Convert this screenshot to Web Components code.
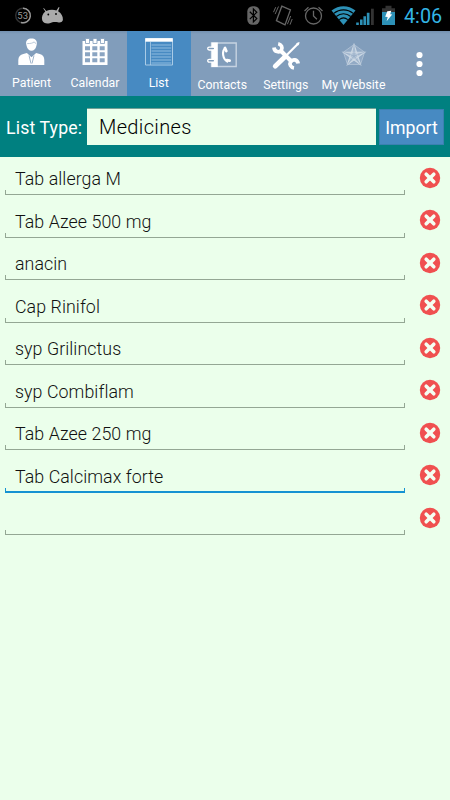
<!DOCTYPE html>
<html lang="en">
<head>
<meta charset="utf-8">
<title>Medicines</title>
<style>
  body {
    margin: 0;
    background: #ebffeb;
    font-family: Roboto, "Noto Sans", sans-serif;
  }
</style>
</head>
<body>
<list-screen></list-screen>

<script>
const ICONS = {
  patient: `<g fill="#fff">
    <path d="M9.2 7.2C8.6 3.4 11 1.5 14.5 1.5s6 1.9 5.3 5.7l-.6 2.3c-.6 2.6-2.4 4.3-4.7 4.3s-4.1-1.7-4.7-4.3z"/>
    <path d="M1.3 28v-5c0-3.2 2-5 5-5.9l3.6-1.2 4.6 4.3 4.6-4.3 3.6 1.2c3 .9 4.6 2.7 4.6 5.9v5z"/></g>
    <path d="M10.2 6.6c3.2 0 5.4-.4 7-1.7.5.8 1.2 1.4 2 1.8" fill="none" stroke="#a9bcd1" stroke-width=".8"/>
    <path d="M12 18.5l2 8M17 18.5l-2 8" fill="none" stroke="#9fb4cb" stroke-width="1"/>`,
  calendar: `<path d="M2.5 4h25v24h-25z" fill="#fff"/>
    <path d="M5.5 1.5h4v5h-4zM13 1.5h4v5h-4zM20.5 1.5h4v5h-4z" fill="#fff" stroke="#819dbb" stroke-width=".8"/>
    <path d="M5 9.3h5v4H5zM12.3 9.3h5v4h-5zM19.7 9.3h5v4h-5zM5 15.2h5v4H5zM12.3 15.2h5v4h-5zM19.7 15.2h5v4h-5zM5 21.2h5v4H5zM12.3 21.2h5v4h-5zM19.7 21.2h5v4h-5z" fill="#8ba5c2"/>`,
  list: `<path d="M1.5 1.5h27v26.5h-27z" fill="none" stroke="#a9cbe6"/>
    <path d="M1.3 1.2h27.4v3.5H1.3z" fill="#fff"/>
    <path d="M6.5 5v23" stroke="#a9cbe6" stroke-width=".8"/>
    <path d="M7.5 8h19.7M7.5 11h19.7M7.5 14h19.7M7.5 17h19.7M7.5 20h19.7M7.5 23h19.7M7.5 26h19.7" stroke="#8fbbdf" stroke-width="1.2"/>`,
  contacts: `<path d="M4.5 2h24.7v23.5H4.5z" fill="none" stroke="#c6d3e2" stroke-width="1.4"/>
    <path d="M4.5 1.5h6.3v24.5H4.5z" fill="#fff"/>
    <g fill="#819dbb" stroke="#fff" stroke-width="1.3"><rect x=".7" y="6.2" width="7" height="2.8" rx="1.4"/><rect x=".7" y="18.3" width="7" height="2.8" rx="1.4"/></g>
    <path d="M18.4 6.8c-3.8 3.5-3 11.3 2.6 14.2" fill="none" stroke="#fff" stroke-width="2.1"/>
    <path d="M18 7l1.3 3M20 19.2l2.6.5" fill="none" stroke="#fff" stroke-width="2.8" stroke-linecap="round"/>`,
  settings: `<g fill="none" stroke="#fff">
    <path d="M9 9l12.5 12.5" stroke-width="4"/>
    <path d="M3 6.5c.3 4.4 5.4 5.6 7.4 2.6 1.6-2.9-.2-5.8-3.2-6.4M27.2 22.5c-.8-4.2-5.6-4.8-7.6-1.8-1.6 2.7.2 5.8 3.4 6.3" stroke-width="3.7"/>
    <path d="M27.5 2.2L15 14.8" stroke-width="2.2"/>
    <path d="M14 15.8L4.2 25.2" stroke-width="4.8" stroke-linecap="round"/></g>
    <path d="M25 2.8l3-1.8.7.7-1.7 3z" fill="#fff"/>`,
  website: `<g fill="none" stroke="#b9c9da" stroke-width="1.15">
    <path d="M15 3.5L25.6 11.2 21.5 23.5h-13L4.4 11.2z" fill="#a3b8cf" fill-opacity=".5" stroke-width=".7"/>
    <path d="M15 3.5l6.5 20L4.4 11.2h21.2L8.5 23.5z" fill="#b9c9da" fill-opacity=".8" stroke="#ccd8e4"/>
    <path d="M15 3.5V15m10.6-3.8L15 15l6.5 8.5M15 15l-6.5 8.5M4.4 11.2L15 15" stroke="#93abc5" stroke-width=".7"/></g>`
};

class StatusBar extends HTMLElement {
  constructor() {
    super();
    this.attachShadow({ mode: "open" });
  }

  connectedCallback() {
    this.shadowRoot.innerHTML = `
    <style>
      :host {
        display: flex;
        justify-content: space-between;
        height: 31px;
        background: #000;
      }
      svg { display: block; }
      .status { display: flex; }
      .time {
        width: 50px;
        box-sizing: border-box;
        padding-left: 4px;
        font-size: 19.8px;
        line-height: 33px;
        color: #33b5e5;
        white-space: nowrap;
      }
    </style>
    <svg width="80" height="31">
      <circle cx="23" cy="15.5" r="7.3" fill="none" stroke="#333" stroke-width="1.4"/>
      <path d="M23 8.2a7.3 7.3 0 1 1-2 14.3" fill="none" stroke="#999" stroke-width="1.4"/>
      <text x="22.7" y="19" text-anchor="middle" font-size="9.5" fill="#999">53</text>
      <path d="M43.8 8l2.4 3c3-1.4 7-1.6 10.2-.6L58.8 7l.7.5-1.4 3.8c3.6 2.4 4.9 5.1 4.8 8.5 0 2-2.5 3.2-5 2.5-3.4-.4-5.6-.2-8.2 1-3.2.8-6.3.1-7.5-3-.9-3.3.4-6.6 3.1-8.7l-2-3.2z" fill="#aaa"/>
      <circle cx="48.3" cy="14.5" r=".9"/><circle cx="56" cy="14" r=".9"/>
    </svg>
    <div class="status">
      <svg width="160" height="31" viewBox="240 0 160 31">
        <rect x="247.3" y="6.2" width="12.4" height="18.6" rx="5.2" fill="#666"/>
        <path d="M249.8 11.8l7 6.8-3.4 3.3V9l3.4 3.3-7 6.8" fill="none" stroke="#000" stroke-width="1.2"/>
        <g fill="none" stroke="#666" stroke-width="1.3">
          <path d="M281.8 6.2l8.6 3.7-5.4 15-8.6-4.2z"/>
          <path d="M278.5 6.5l-3.4 7.6M275.7 7.2l-2.2 5M290.7 16l-3.3 8.2M292.2 19l-2.2 5.7" stroke-width="1"/>
          <circle cx="313.5" cy="16" r="8"/><path d="M313.5 10.8V16l3.4 3.2M304.5 11l4-3.7M318.5 7.3l4 3.7"/>
        </g>
        <path d="M331.5 10.5c7.3-5.8 16.7-5.8 24 0l-12 14.5z" fill="#2d91b7"/>
        <g fill="none" stroke="#000" stroke-width="1.1"><path d="M333.8 13.4c5.8-4.7 13.6-4.7 19.4 0M336.3 16.5c4.3-3.6 10.1-3.6 14.4 0M339.2 19.6c2.7-2.2 5.9-2.2 8.6 0"/></g>
        <path d="M356.2 22.5h2.6V25h-2.6zM360 19.4h2.6V25H360zM363.4 16.2h2.6V25h-2.6zM366.8 12.8h2.7V25h-2.7z" fill="#2d91b7"/>
        <path d="M371 8.7h2.8V25H371z" fill="#333"/>
        <path d="M382 8.2h3.5V5.8h6v2.4h3.5V12h-13z" fill="#333"/>
        <path d="M382 12h13v13h-13z" fill="#2d91b7"/>
        <path d="M387.3 11.2l4-.4-1.1 3.4 2 .3-5.6 6.8 1.1-4.4-2.5-.2z" fill="#fff"/>
      </svg>
      <div class="time"><slot></slot></div>
    </div>`;
  }
}

class TabItem extends HTMLElement {
  constructor() {
    super();
    this.attachShadow({ mode: "open" });
  }

  connectedCallback() {
    const icon = ICONS[this.getAttribute("icon")];
    this.shadowRoot.innerHTML = `
    <style>
      :host {
        display: flex;
        flex-direction: column;
        align-items: center;
        gap: 7px;
        box-sizing: border-box;
        padding-top: 5.5px;
        color: #fff;
        font-size: 12.3px;
        line-height: 18px;
        letter-spacing: .03px;
        white-space: nowrap;
      }
      :host([active]) { background: #478ac2; }
      :host([low]) { padding-top: 9.5px; gap: 5px; }
      svg { display: block; }
    </style>
    <svg width="30" height="30">${icon}</svg>
    <span><slot></slot></span>`;
  }
}

class TabBar extends HTMLElement {
  constructor() {
    super();
    this.attachShadow({ mode: "open" });
  }

  connectedCallback() {
    this.shadowRoot.innerHTML = `
    <style>
      :host {
        display: grid;
        grid-template-columns: 63px 64px 63.5px 63.5px 63.5px 72px 1fr;
        height: 65px;
        background: linear-gradient(#7390af, #819dbb 3px);
      }
      svg { display: block; }
    </style>
    <slot></slot>
    <svg width="60" height="65"><g fill="#fff"><circle cx="29.5" cy="24" r="3.1"/><circle cx="29.5" cy="33" r="3.1"/><circle cx="29.5" cy="42" r="3.1"/></g></svg>`;
  }
}

class ListType extends HTMLElement {
  constructor() {
    super();
    this.attachShadow({ mode: "open" });
  }

  connectedCallback() {
    this.shadowRoot.innerHTML = `
    <style>
      :host {
        display: grid;
        grid-template-columns: 78px 289px 65px;
        column-gap: 3px;
        align-items: center;
        box-sizing: border-box;
        height: 61px;
        padding: 0 6px;
        background: #008080;
        color: #fff;
        font-size: 17.7px;
        white-space: nowrap;
      }
      .label { padding-top: 2px; letter-spacing: .15px; }
      .select {
        box-sizing: border-box;
        height: 37px;
        padding-left: 12px;
        border-top: 1px solid #70a096;
        background: #ebffeb;
        color: #000;
        font-size: 20px;
        font-weight: 300;
        line-height: 37px;
        letter-spacing: .35px;
      }
      button {
        height: 36px;
        margin: 1px 0 0;
        padding: 2px 0 0;
        border: 1px solid #3b80b0;
        background: #478ac2;
        color: #fff;
        font: inherit;
      }
    </style>
    <span class="label">List Type:</span>
    <div class="select"><slot></slot></div>
    <button>Import</button>`;
  }
}

class ListRow extends HTMLElement {
  constructor() {
    super();
    this.attachShadow({ mode: "open" });
  }

  connectedCallback() {
    this.shadowRoot.innerHTML = `
    <style>
      :host {
        --line: #94a794;
        display: flex;
        justify-content: space-between;
        box-sizing: border-box;
        height: 42.5px;
        padding: 0 9px 0 5px;
      }
      :host([focused]) { --line: #1592d2; }
      .field {
        display: flex;
        flex-direction: column;
        justify-content: flex-end;
        width: 400px;
        height: 42.5px;
      }
      .text {
        padding-left: 10px;
        color: #111;
        font-size: 17.8px;
        font-weight: 300;
        line-height: 22px;
        letter-spacing: .07px;
        white-space: nowrap;
      }
      .line {
        height: 5px;
        box-sizing: border-box;
        border: 1px solid var(--line);
        border-top: 0;
      }
      :host([focused]) .line { border-bottom-width: 2px; }
      svg { display: block; margin-top: 14px; }
    </style>
    <div class="field">
      <div class="text"><slot></slot></div>
      <div class="line"></div>
    </div>
    <svg width="22" height="22">
      <circle cx="11" cy="11" r="10.2" fill="#f05050"/>
      <path d="M7.2 7.2l7.6 7.6M14.8 7.2l-7.6 7.6" stroke="#f4fff2" stroke-width="3.6" stroke-linecap="round"/>
    </svg>`;
  }
}

class ListScreen extends HTMLElement {
  constructor() {
    super();
    this.attachShadow({ mode: "open" });
    this.items = [
      "Tab allerga M", "Tab Azee 500 mg", "anacin", "Cap Rinifol", "syp Grilinctus",
      "syp Combiflam", "Tab Azee 250 mg", "Tab Calcimax forte", ""
    ];
    this.focusedIndex = 7;
  }

  connectedCallback() {
    this.shadowRoot.innerHTML = `
    <style>
      :host {
        display: block;
        width: 450px;
        height: 800px;
        overflow: hidden;
        background: #ebffeb;
      }
      .rows { margin-top: -4.5px; }
    </style>
    <status-bar>4:06</status-bar>
    <tab-bar>
      <tab-item icon="patient">Patient</tab-item>
      <tab-item icon="calendar">Calendar</tab-item>
      <tab-item icon="list" active>List</tab-item>
      <tab-item icon="contacts" low>Contacts</tab-item>
      <tab-item icon="settings" low>Settings</tab-item>
      <tab-item icon="website" low>My Website</tab-item>
    </tab-bar>
    <list-type>Medicines</list-type>
    <div class="rows">
      ${this.items.map((item, i) => `<list-row${i === this.focusedIndex ? " focused" : ""}>${item}</list-row>`).join("")}
    </div>`;
  }
}

customElements.define("status-bar", StatusBar);
customElements.define("tab-item", TabItem);
customElements.define("tab-bar", TabBar);
customElements.define("list-type", ListType);
customElements.define("list-row", ListRow);
customElements.define("list-screen", ListScreen);
</script>
</body>
</html>
